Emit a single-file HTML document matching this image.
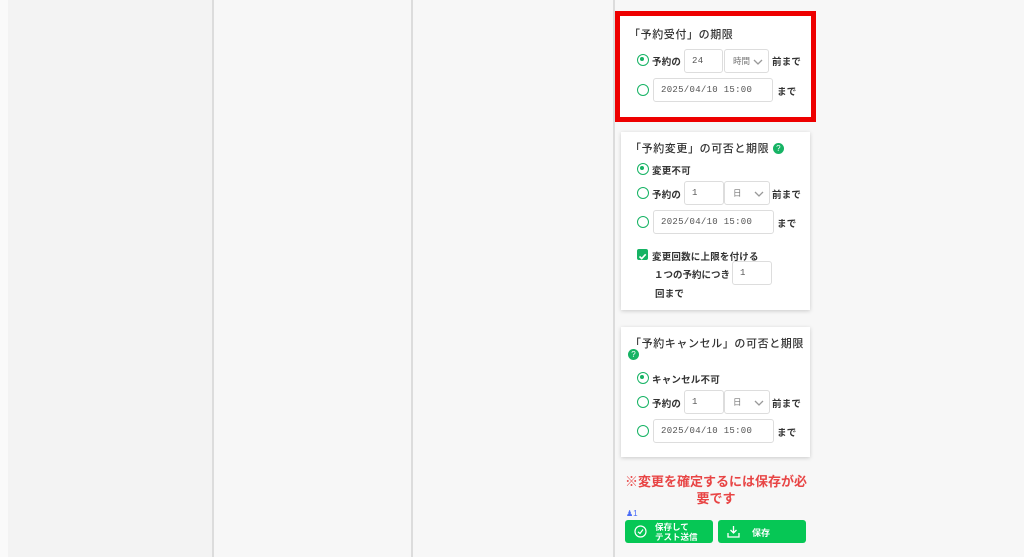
<!DOCTYPE html><html><head><meta charset="utf-8"><style>
*{box-sizing:border-box;margin:0;padding:0}
body{width:1024px;height:557px;background:#f7f7f7;font-family:"Liberation Sans","Noto Sans CJK JP",sans-serif;position:relative;overflow:hidden;color:#333}
.a{position:absolute}
.vl{position:absolute;top:0;height:557px;width:2px;background:#dcdcdc}
.card{position:absolute;background:#fff;box-shadow:0 1px 4px rgba(0,0,0,.18);left:621px;width:189px}
.t{font-size:11px;font-weight:500;color:#333;position:absolute;left:9px;letter-spacing:.6px}
.lb{font-size:9.5px;font-weight:bold;color:#333;position:absolute;letter-spacing:.2px}
.rad{position:absolute;width:12px;height:12px;border:1.6px solid #16b364;border-radius:50%}
.rad.on::after{content:"";position:absolute;left:2.4px;top:2.4px;width:4px;height:4px;border-radius:50%;background:#16b364}
.in{position:absolute;border:1px solid #ddd;border-radius:3px;background:#fff;font-size:9px;color:#555;padding-left:7px;display:flex;align-items:center;font-family:"Liberation Mono","Noto Sans CJK JP",monospace;letter-spacing:.3px}
.sel{position:absolute;border:1px solid #ddd;border-radius:3px;background:#fff;font-size:8.5px;color:#777;padding-left:8px;display:flex;align-items:center}
.sel svg{position:absolute;right:5px;top:9px}
.q{display:inline-block;width:11px;height:11px;border-radius:50%;background:#16b364;color:#fff;font-size:8px;text-align:center;line-height:11px;vertical-align:1px;letter-spacing:0}
.btn{position:absolute;background:#06c755;border-radius:3px;color:#fff;font-weight:bold;font-size:9px}
</style></head><body>
<div class="a" style="left:0;top:0;width:8px;height:557px;background:#fafafa"></div>
<div class="a" style="left:8px;top:0;width:204px;height:557px;background:#f3f3f3"></div>
<div class="vl" style="left:212px"></div>
<div class="vl" style="left:411px"></div>
<div class="vl" style="left:613px"></div>

<div class="a" style="left:615px;top:11px;width:201px;height:111px;background:#ee0000"></div>
<div class="card" style="left:620px;top:16px;width:191px;height:101px;box-shadow:none">
<div class="t" style="top:10px">「予約受付」の期限</div>
<div class="rad on" style="left:17px;top:38px"></div>
<div class="lb" style="left:32px;top:38px">予約の</div>
<div class="in" style="left:64px;top:33px;width:39px;height:24px">24</div>
<div class="sel" style="left:104px;top:33px;width:45px;height:24px">時間<svg width="10" height="6"><path d="M1 1L5 5L9 1" stroke="#999" fill="none" stroke-width="1.3"/></svg></div>
<div class="lb" style="left:152px;top:38px">前まで</div>
<div class="rad" style="left:17px;top:68px"></div>
<div class="in" style="left:33px;top:62px;width:120px;height:24px">2025/04/10 15:00</div>
<div class="lb" style="left:157px;top:68px">まで</div>
</div>

<div class="card" style="top:132px;height:178px">
<div class="t" style="top:8px">「予約変更」の可否と期限 <span class="q">?</span></div>
<div class="rad on" style="left:16px;top:31px"></div>
<div class="lb" style="left:31px;top:31px">変更不可</div>
<div class="rad" style="left:16px;top:55px"></div>
<div class="lb" style="left:31px;top:55px">予約の</div>
<div class="in" style="left:63px;top:49px;width:40px;height:24px">1</div>
<div class="sel" style="left:103px;top:49px;width:46px;height:24px">日<svg width="10" height="6"><path d="M1 1L5 5L9 1" stroke="#999" fill="none" stroke-width="1.3"/></svg></div>
<div class="lb" style="left:151px;top:55px">前まで</div>
<div class="rad" style="left:16px;top:84px"></div>
<div class="in" style="left:32px;top:78px;width:121px;height:24px">2025/04/10 15:00</div>
<div class="lb" style="left:156px;top:84px">まで</div>
<div class="a" style="left:16px;top:117px;width:11px;height:11px;background:#16b364;border-radius:2px"><svg width="11" height="11"><path d="M2.5 5.5L4.7 7.6L8.7 3.3" stroke="#fff" stroke-width="1.6" fill="none"/></svg></div>
<div class="lb" style="left:31px;top:117px">変更回数に上限を付ける</div>
<div class="lb" style="left:33px;top:135px;letter-spacing:0">１つの予約につき</div>
<div class="in" style="left:111px;top:129px;width:40px;height:24px">1</div>
<div class="lb" style="left:34px;top:154px">回まで</div>
</div>

<div class="card" style="top:327px;height:130px">
<div class="t" style="top:8px">「予約キャンセル」の可否と期限</div>
<span class="q a" style="left:7px;top:22px">?</span>
<div class="rad on" style="left:16px;top:45px"></div>
<div class="lb" style="left:31px;top:45px">キャンセル不可</div>
<div class="rad" style="left:16px;top:69px"></div>
<div class="lb" style="left:31px;top:69px">予約の</div>
<div class="in" style="left:63px;top:63px;width:40px;height:24px">1</div>
<div class="sel" style="left:103px;top:63px;width:46px;height:24px">日<svg width="10" height="6"><path d="M1 1L5 5L9 1" stroke="#999" fill="none" stroke-width="1.3"/></svg></div>
<div class="lb" style="left:151px;top:69px">前まで</div>
<div class="rad" style="left:16px;top:98px"></div>
<div class="in" style="left:32px;top:92px;width:121px;height:24px">2025/04/10 15:00</div>
<div class="lb" style="left:156px;top:98px">まで</div>
</div>

<div class="a" style="left:621px;top:473px;width:190px;text-align:center;color:#e84545;font-weight:bold;font-size:13px;line-height:17px;letter-spacing:0">※変更を確定するには保存が必要です</div>
<div class="a" style="left:626px;top:509px;font-size:8px;color:#4a6cf7">&#9823;1</div>
<div class="btn" style="left:625px;top:520px;width:88px;height:23px">
<svg class="a" style="left:9px;top:5px" width="13" height="13"><circle cx="6.5" cy="6.5" r="5.5" stroke="#fff" fill="none" stroke-width="1.2"/><path d="M4 6.8L6 8.5L9 4.5" stroke="#fff" fill="none" stroke-width="1.2"/></svg>
<div class="a" style="left:30px;top:2px;line-height:10px;font-size:8.5px">保存して<br>テスト送信</div></div>
<div class="btn" style="left:718px;top:520px;width:88px;height:23px">
<svg class="a" style="left:9px;top:5px" width="13" height="13"><path d="M6.5 1V8M3.5 5L6.5 8L9.5 5M1 8V12H12V8" stroke="#fff" fill="none" stroke-width="1.3"/></svg>
<div class="a" style="left:34px;top:6px">保存</div></div>
</body></html>
